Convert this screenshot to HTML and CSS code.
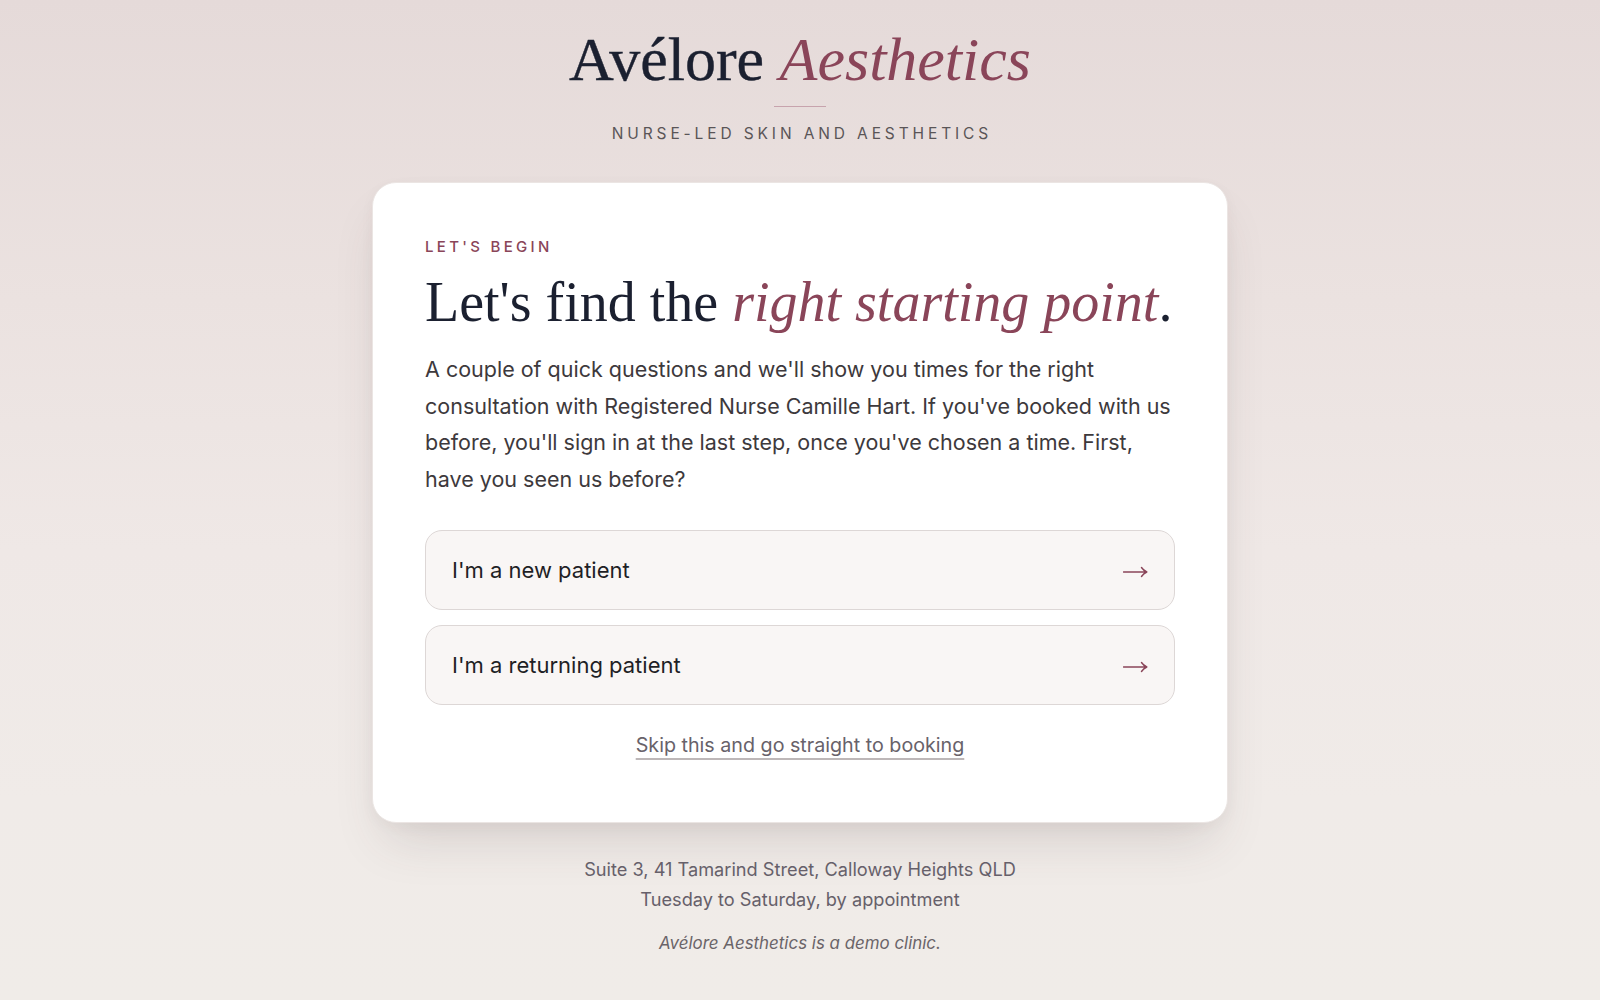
FILE: index.html
```html
<!DOCTYPE html>
<html lang="en">
<head>
<meta charset="utf-8">
<title>Avélore Aesthetics</title>
<link rel="stylesheet" href="styles.css">
</head>
<body>
<div class="page">
  <header class="brand">
    <h1 class="brand-name">Avélore <em>Aesthetics</em></h1>
    <div class="brand-rule"></div>
    <p class="brand-tag">Nurse-led skin and aesthetics</p>
  </header>

  <main class="card">
    <p class="eyebrow">Let's begin</p>
    <h2 class="headline">Let's find the <em>right starting point</em>.</h2>
    <p class="intro">A couple of quick questions and we'll show you times for the right consultation with Registered Nurse Camille Hart. If you've booked with us before, you'll sign in at the last step, once you've chosen a time. First, have you seen us before?</p>

    <div class="choices">
      <button class="choice" type="button">
        <span class="choice-label">I'm a new patient</span>
        <svg class="choice-arrow" width="25" height="12" viewBox="0 0 25 12" aria-hidden="true"><path d="M0.5 6H23.5M18.5 1.5Q20.5 4.5 23.8 6Q20.5 7.5 18.5 10.5" fill="none" stroke="currentColor" stroke-width="1.4" stroke-linecap="round" stroke-linejoin="round"/></svg>
      </button>
      <button class="choice" type="button">
        <span class="choice-label">I'm a returning patient</span>
        <svg class="choice-arrow" width="25" height="12" viewBox="0 0 25 12" aria-hidden="true"><path d="M0.5 6H23.5M18.5 1.5Q20.5 4.5 23.8 6Q20.5 7.5 18.5 10.5" fill="none" stroke="currentColor" stroke-width="1.4" stroke-linecap="round" stroke-linejoin="round"/></svg>
      </button>
    </div>

    <div class="skip">
      <a class="skip-link" href="#">Skip this and go straight to booking</a>
    </div>
  </main>

  <footer class="footer">
    <p class="footer-line">Suite 3, 41 Tamarind Street, Calloway Heights QLD</p>
    <p class="footer-line">Tuesday to Saturday, by appointment</p>
    <p class="footer-note">Avélore Aesthetics is a demo clinic.</p>
  </footer>
</div>
</body>
</html>
```

FILE: styles.css
```css
* { box-sizing: border-box; }

html, body {
  margin: 0;
  padding: 0;
}

body {
  min-height: 1000px;
  background: linear-gradient(180deg, #e5dad9 0%, #ebe2e0 30%, #efe8e6 55%, #f0ebe8 80%, #f0ece8 100%);
  font-family: "Inter", "Liberation Sans", sans-serif;
  color: #3b383b;
}

.page {
  display: flex;
  flex-direction: column;
  align-items: center;
  padding-top: 25px;
}

.brand {
  display: flex;
  flex-direction: column;
  align-items: center;
}

.brand-name {
  margin: 0;
  font-family: "Liberation Serif", serif;
  font-weight: 400;
  font-size: 62px;
  line-height: 68px;
  color: #1b2030;
  -webkit-text-stroke: 0.4px #1b2030;
}

.brand-name em {
  font-style: italic;
  color: #8a4559;
  -webkit-text-stroke: 0;
}

.brand-rule {
  width: 52px;
  height: 1px;
  margin-top: 13px;
  background: #c7a3ad;
}

.brand-tag {
  margin: 17px 0 0;
  font-size: 15.5px;
  line-height: 20px;
  letter-spacing: 0.25em;
  text-transform: uppercase;
  color: #5a5557;
  padding-left: 0.25em;
}

.card {
  width: 856px;
  margin-top: 38px;
  padding: 54px 52px 61px;
  background: #ffffff;
  border: 1px solid #ebe5e3;
  border-radius: 24px;
  box-shadow: 0 28px 50px -14px rgba(80, 60, 60, 0.17), 0 4px 14px rgba(80, 60, 60, 0.04);
}

.eyebrow {
  margin: 0;
  font-size: 15px;
  line-height: 20px;
  font-weight: 500;
  letter-spacing: 0.22em;
  text-transform: uppercase;
  color: #8a4559;
}

.headline {
  margin: 13px 0 0;
  font-family: "Liberation Serif", serif;
  font-weight: 400;
  font-size: 56px;
  line-height: 64px;
  color: #1b2030;
}

.headline em {
  font-style: italic;
  color: #8a4559;
}

.intro {
  margin: 17px 0 0;
  font-size: 21.5px;
  line-height: 36.7px;
  color: #3d393c;
}

.choices {
  display: flex;
  flex-direction: column;
  gap: 15px;
  margin-top: 32px;
}

.choice {
  display: flex;
  align-items: center;
  justify-content: space-between;
  width: 100%;
  height: 80px;
  padding: 0 26px;
  background: #f9f6f5;
  border: 1.5px solid #ddd7d6;
  border-radius: 17px;
  font-family: inherit;
  cursor: pointer;
  text-align: left;
}

.choice-label {
  font-size: 22px;
  line-height: 30px;
  color: #1f1f25;
}

.choice-arrow {
  display: block;
  color: #8a4559;
  margin-top: 4px;
}

.skip {
  display: flex;
  justify-content: center;
  margin-top: 25px;
}

.skip-link {
  font-size: 19.7px;
  line-height: 31px;
  color: #68626a;
  text-decoration: underline;
  text-decoration-color: #bdb7b8;
  text-decoration-thickness: 1.5px;
  text-underline-offset: 6px;
}

.footer {
  display: flex;
  flex-direction: column;
  align-items: center;
  margin-top: 31px;
}

.footer-line {
  margin: 0;
  font-size: 18.2px;
  line-height: 30px;
  color: #66606a;
}

.footer-note {
  margin: 17px 0 0;
  font-size: 16.9px;
  line-height: 24px;
  font-style: italic;
  color: #6a6468;
}
```
